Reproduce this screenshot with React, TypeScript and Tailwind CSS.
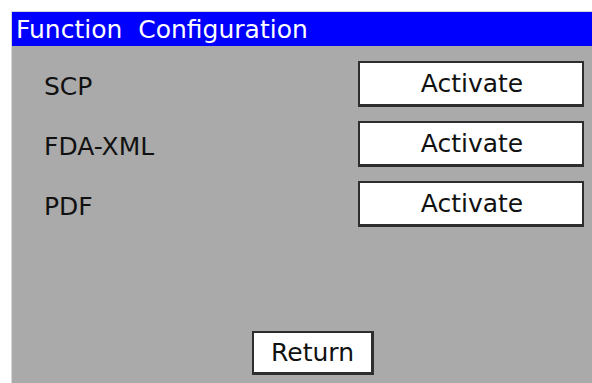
const rows = ["SCP", "FDA-XML", "PDF"];

export default function App() {
  return (
    <div
      className="h-[383px] w-[592px] overflow-hidden bg-white pl-[11px] pt-[11px]"
      style={{ fontFamily: '"DejaVu Sans", Verdana, sans-serif' }}
    >
      <div className="flex h-[372px] flex-col border-l border-t border-[#d8d8d8]">
        <div className="flex h-[34px] items-center bg-[#0000ff] pl-1 text-[25px] leading-none text-white whitespace-pre">
          {"Function  Configuration"}
        </div>
        <div className="flex flex-1 flex-col bg-[#aaaaaa]">
          <div className="flex flex-col gap-[14px] pt-[15px] pl-[32px] pr-[8px]">
            {rows.map((name) => (
              <div key={name} className="flex h-[46px] items-center justify-between">
                <span className="pt-[4px] text-[25px] leading-none text-[#111]">{name}</span>
                <button
                  type="button"
                  className="flex h-[46px] w-[226px] items-center justify-center border-2 border-b-[3px] border-[#2e2e2e] bg-white pl-[2px] text-[25px] leading-none text-[#111]"
                >
                  Activate
                </button>
              </div>
            ))}
          </div>
          <div className="mt-auto flex justify-center pb-[8px] pl-[22px]">
            <button
              type="button"
              className="flex h-[44px] w-[122px] items-center justify-center border-2 border-b-[3px] border-r-[3px] border-[#2e2e2e] bg-white text-[25px] leading-none text-[#111]"
            >
              Return
            </button>
          </div>
        </div>
      </div>
    </div>
  );
}
